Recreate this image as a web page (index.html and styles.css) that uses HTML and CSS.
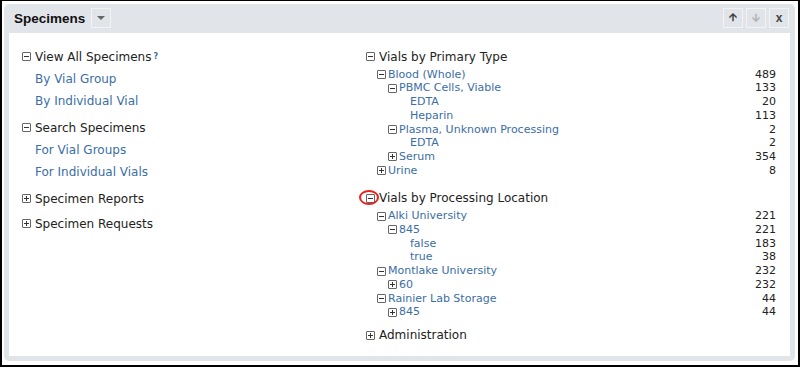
FILE: index.html
```html
<!DOCTYPE html>
<html lang="en">
<head>
    <meta charset="UTF-8">
    <title>Specimens</title>
    <link rel="stylesheet" href="styles.css">
</head>
<body>
    <div class="frame">
        <div class="panel">
            <div class="panel-head">
                <span class="title">Specimens</span>
                <span class="btn drop"><span class="caret"></span></span>
                <span class="spacer"></span>
                <span class="btn">&#129129;</span>
                <span class="btn dim">&#129131;</span>
                <span class="btn x">x</span>
            </div>
            <div class="panel-body">
                <div class="col-left">
                    <div class="group">
                        <div class="head"><span class="tog minus"></span>View All Specimens<sup class="help">?</sup></div>
                        <a class="sub">By Vial Group</a>
                        <a class="sub">By Individual Vial</a>
                    </div>
                    <div class="group">
                        <div class="head"><span class="tog minus"></span>Search Specimens</div>
                        <a class="sub">For Vial Groups</a>
                        <a class="sub">For Individual Vials</a>
                    </div>
                    <div class="group closed">
                        <div class="head"><span class="tog plus"></span>Specimen Reports</div>
                    </div>
                    <div class="group closed">
                        <div class="head"><span class="tog plus"></span>Specimen Requests</div>
                    </div>
                </div>
                <div class="col-right">
                    <div class="section">
                        <div class="head"><span class="tog minus"></span>Vials by Primary Type</div>
                        <div class="tree">
                            <div class="row l1"><span class="tog minus"></span><a>Blood (Whole)</a><span class="num">489</span></div>
                            <div class="row l2"><span class="tog minus"></span><a>PBMC Cells, Viable</a><span class="num">133</span></div>
                            <div class="row l3"><a>EDTA</a><span class="num">20</span></div>
                            <div class="row l3"><a>Heparin</a><span class="num">113</span></div>
                            <div class="row l2"><span class="tog minus"></span><a>Plasma, Unknown Processing</a><span class="num">2</span></div>
                            <div class="row l3"><a>EDTA</a><span class="num">2</span></div>
                            <div class="row l2"><span class="tog plus"></span><a>Serum</a><span class="num">354</span></div>
                            <div class="row l1"><span class="tog plus"></span><a>Urine</a><span class="num">8</span></div>
                        </div>
                    </div>
                    <div class="section tight">
                        <div class="head marked"><span class="tog minus"></span>Vials by Processing Location<span class="ring"></span></div>
                        <div class="tree">
                            <div class="row l1"><span class="tog minus"></span><a>Alki University</a><span class="num">221</span></div>
                            <div class="row l2"><span class="tog minus"></span><a>845</a><span class="num">221</span></div>
                            <div class="row l3"><a>false</a><span class="num">183</span></div>
                            <div class="row l3"><a>true</a><span class="num">38</span></div>
                            <div class="row l1"><span class="tog minus"></span><a>Montlake University</a><span class="num">232</span></div>
                            <div class="row l2"><span class="tog plus"></span><a>60</a><span class="num">232</span></div>
                            <div class="row l1"><span class="tog minus"></span><a>Rainier Lab Storage</a><span class="num">44</span></div>
                            <div class="row l2"><span class="tog plus"></span><a>845</a><span class="num">44</span></div>
                        </div>
                    </div>
                    <div class="section">
                        <div class="head"><span class="tog plus"></span>Administration</div>
                    </div>
                </div>
            </div>
        </div>
    </div>
</body>
</html>
```

FILE: styles.css
```css
html, body {
    margin: 0;
    padding: 0;
    background: white;
}
body {
    font-family: "DejaVu Sans", Verdana, sans-serif;
    font-size: 11px;
    color: #222;
}
.frame {
    width: 800px;
    height: 367px;
    box-sizing: border-box;
    border: 2px solid #000;
    border-top-width: 1px;
    padding: 3px 3px 4px 2px;
    background: white;
}
.panel {
    height: 100%;
    box-sizing: border-box;
    background: #e1e5e9;
    border-radius: 5px;
    padding: 0 5px 5px 5px;
    display: flex;
    flex-direction: column;
}
.panel-head {
    height: 30px;
    display: flex;
    align-items: center;
    gap: 3px;
}
.title {
    font-family: "Liberation Sans", Arial, sans-serif;
    font-weight: bold;
    font-size: 13.5px;
    color: #111;
    margin-left: 5px;
    margin-right: 3px;
}
.spacer { flex: 1; }
.btn {
    width: 20px;
    height: 20px;
    box-sizing: border-box;
    border: 1px solid #f1f3f5;
    display: flex;
    align-items: center;
    justify-content: center;
    font-size: 11px;
    font-weight: bold;
    color: #444;
}
.btn:last-child { margin-right: 1px; }
.btn.drop { margin-bottom: 1px; }
.btn.dim { color: #b0b4b8; }
.btn.x { font-family: "Liberation Sans", Arial, sans-serif; font-size: 12px; }
.caret {
    width: 0;
    height: 0;
    border-left: 4px solid transparent;
    border-right: 4px solid transparent;
    border-top: 4px solid #666;
}
.panel-body {
    flex: 1;
    background: white;
    display: flex;
    padding: 17px 14px 0 13px;
}
.col-left {
    width: 344px;
}
.col-right {
    flex: 1;
}
a {
    color: #3b6ea5;
    text-decoration: none;
}
.head {
    font-size: 12px;
    line-height: 14px;
    color: #222;
    display: flex;
    align-items: center;
    position: relative;
}
.group { margin-bottom: 13px; }
.group.closed { margin-bottom: 11px; }
.group .sub {
    display: block;
    font-size: 12px;
    margin-left: 13px;
    margin-top: 8px;
    line-height: 14px;
}
.help {
    font-size: 8px;
    color: #3b6ea5;
    font-weight: bold;
    margin-left: 2px;
    align-self: flex-start;
}
.tog {
    width: 7px;
    height: 7px;
    border: 1px solid #666;
    border-radius: 1px;
    margin-right: 4px;
    position: relative;
    flex: none;
}
.tog::before {
    content: "";
    position: absolute;
    left: 1px;
    top: 3px;
    width: 5px;
    height: 1px;
    background: #333;
}
.tog.plus::after {
    content: "";
    position: absolute;
    left: 3px;
    top: 1px;
    width: 1px;
    height: 5px;
    background: #333;
}
.section { margin-bottom: 14px; }
.section.tight { margin-bottom: 9px; }
.tree { margin-top: 4px; }
.row {
    display: flex;
    align-items: center;
    line-height: 13.7px;
    font-size: 11px;
}
.row .tog { margin-right: 2px; }
.row.l1 { padding-left: 11px; }
.row.l2 { padding-left: 22px; }
.row.l3 { padding-left: 44px; }
.num {
    margin-left: auto;
    color: #222;
}
.ring {
    position: absolute;
    left: -7px;
    top: -1px;
    width: 20px;
    height: 15px;
    box-sizing: border-box;
    border: 2px solid #e8231d;
    border-radius: 50%;
}
```
